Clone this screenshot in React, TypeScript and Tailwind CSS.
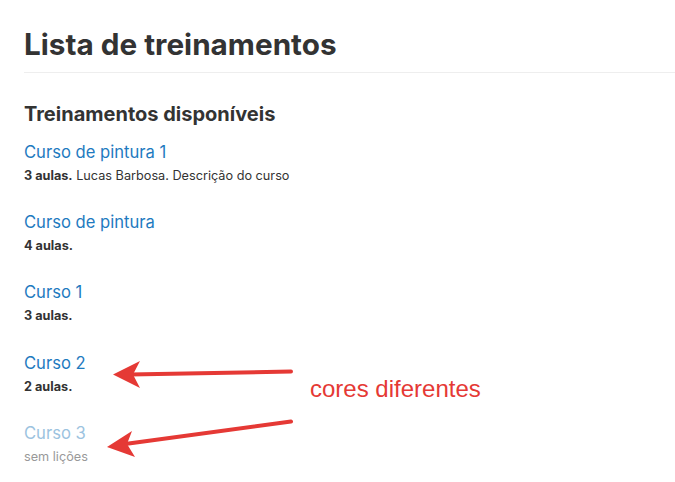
import React from "react";

const courses = [
  { title: "Curso de pintura 1", count: "3 aulas.", extra: " Lucas Barbosa. Descrição do curso", faded: false },
  { title: "Curso de pintura", count: "4 aulas.", extra: "", faded: false },
  { title: "Curso 1", count: "3 aulas.", extra: "", faded: false },
  { title: "Curso 2", count: "2 aulas.", extra: "", faded: false },
  { title: "Curso 3", count: "", extra: "sem lições", faded: true },
];

export default function App() {
  return (
    <div className="relative w-[675px] h-[482px] bg-white overflow-hidden" style={{ fontFamily: "Inter, Lato, sans-serif" }}>
      <div className="pl-[24px] pt-[24px]">
        <div className="border-b border-[#eeeeee] pb-[8px]">
          <h1 className="text-[29.7px] leading-[40px] font-bold text-[#333333]">Lista de treinamentos</h1>
        </div>
        <h2 className="mt-[27px] text-[20px] leading-[28px] font-bold text-[#333333]">Treinamentos disponíveis</h2>
        <div className="mt-[12px] flex flex-col gap-[25.2px]">
          {courses.map((c) => (
            <div key={c.title} className="flex flex-col gap-[3px]">
              <div className={`text-[16.6px] leading-[24px] ${c.faded ? "text-[#9cc3e0]" : "text-[#1f7bbf]"}`}>{c.title}</div>
              <div className={`text-[12.7px] leading-[18px] ${c.faded ? "text-[#999999]" : "text-[#333333]"}`}>
                {c.count && <span className="font-bold">{c.count}</span>}
                {c.extra}
              </div>
            </div>
          ))}
        </div>
      </div>
      <svg className="absolute left-0 top-0" width="675" height="482" viewBox="0 0 675 482">
        <line x1="291" y1="371.5" x2="130" y2="374.5" stroke="#e53935" strokeWidth="4" strokeLinecap="round" />
        <polygon points="113,374.5 140,361 133,374.5 140,388" fill="#e53935" />
        <line x1="291" y1="421.5" x2="125" y2="444" stroke="#e53935" strokeWidth="4" strokeLinecap="round" />
        <polygon points="107,447 132,431 127,444 135,457" fill="#e53935" />
      </svg>
      <div className="absolute left-[310px] top-[375px] text-[24px] leading-[28px] text-[#e53935]" style={{ fontFamily: "'Liberation Sans', Arial, sans-serif" }}>
        cores diferentes
      </div>
    </div>
  );
}
